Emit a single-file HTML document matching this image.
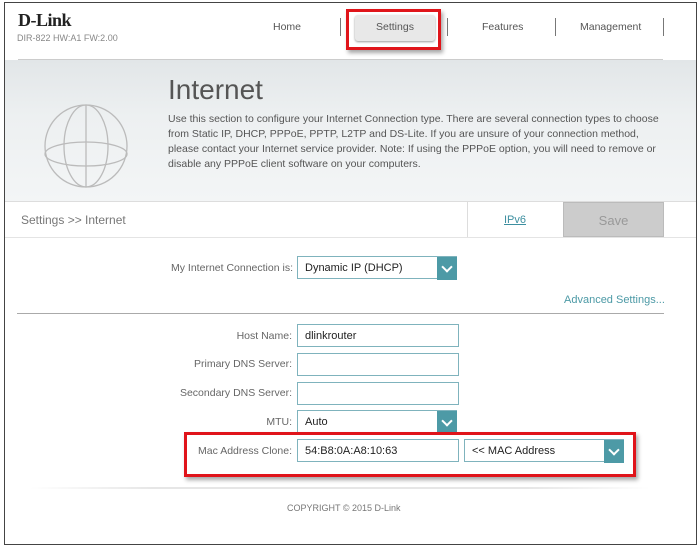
<!DOCTYPE html>
<html><head><style>
*{margin:0;padding:0;box-sizing:border-box}
body{width:700px;height:548px;background:#fff;font-family:"Liberation Sans",sans-serif;position:relative;overflow:hidden}
.a{position:absolute}
.frame{left:4px;top:2px;width:693px;height:543px;border:1px solid #444}
.lbl{font-size:10.5px;color:#666;text-align:right;width:140px}
.inp{border:1px solid #7fb3bd;background:#fff;height:23px;font-size:11px;color:#222;padding:5px 0 0 7px}
.dd{width:20px;height:23px;background:#4d9aa6;top:0;right:-1px}
.dd:after{content:"";position:absolute;left:6px;top:6px;width:6px;height:6px;border-right:2px solid #fff;border-bottom:2px solid #fff;transform:rotate(45deg)}
.red{border:3px solid #e0141a;box-shadow:2px 3px 4px rgba(0,0,0,.35)}
</style></head><body>
<div class="a frame"></div>
<div class="a" style="left:5px;top:60px;width:691px;height:141px;background:linear-gradient(180deg,#e2e6e8,#edf0f1 40%,#f3f5f6);"></div>
<div class="a" style="left:18px;top:59px;width:645px;height:1px;background:#ccc"></div>
<div class="a" style="left:18px;top:10px;font-family:'Liberation Serif',serif;font-weight:bold;font-size:18px;color:#222;letter-spacing:-0.5px">D-Link</div>
<div class="a" style="left:17px;top:33px;font-size:9px;color:#888">DIR-822 HW:A1 FW:2.00</div>
<div class="a" style="left:273px;top:21px;font-size:10.5px;color:#555">Home</div>
<div class="a" style="left:340px;top:18px;width:1px;height:18px;background:#777"></div>
<div class="a" style="left:355px;top:15px;width:80px;height:26px;background:#e8e8e8;border-radius:3px;box-shadow:0 1px 2px #999"></div>
<div class="a" style="left:376px;top:21px;font-size:10.5px;color:#555">Settings</div>
<div class="a" style="left:447px;top:18px;width:1px;height:18px;background:#777"></div>
<div class="a" style="left:482px;top:21px;font-size:10.5px;color:#555">Features</div>
<div class="a" style="left:555px;top:18px;width:1px;height:18px;background:#777"></div>
<div class="a" style="left:580px;top:21px;font-size:10.5px;color:#555">Management</div>
<div class="a" style="left:663px;top:18px;width:1px;height:18px;background:#777"></div>
<div class="a red" style="left:346px;top:9px;width:95px;height:41px"></div>
<svg class="a" style="left:42px;top:102px" width="88" height="88" viewBox="0 0 88 88" fill="none" stroke="#bbb" stroke-width="1.3"><circle cx="44" cy="44" r="41"/><ellipse cx="44" cy="44" rx="22" ry="41"/><line x1="44" y1="3" x2="44" y2="85"/><ellipse cx="44" cy="52" rx="41" ry="12"/></svg>
<div class="a" style="left:168px;top:74px;font-size:28px;color:#555">Internet</div>
<div class="a" style="left:168px;top:112px;width:500px;font-size:10.5px;line-height:15px;color:#555">Use this section to configure your Internet Connection type. There are several connection types to choose from Static IP, DHCP, PPPoE, PPTP, L2TP and DS-Lite. If you are unsure of your connection method, please contact your Internet service provider. Note: If using the PPPoE option, you will need to remove or disable any PPPoE client software on your computers.</div>
<div class="a" style="left:5px;top:201px;width:691px;height:37px;border-top:1px solid #ddd;border-bottom:1px solid #e4e4e4"></div>
<div class="a" style="left:21px;top:213px;font-size:12px;color:#777">Settings &gt;&gt; Internet</div>
<div class="a" style="left:467px;top:202px;width:1px;height:35px;background:#ddd"></div>
<div class="a" style="left:504px;top:214px;font-size:11px;color:#3d8fa0;text-decoration:underline">IPv6</div>
<div class="a" style="left:563px;top:202px;width:101px;height:35px;background:#ccc;border:1px solid #bbb;color:#999;font-size:13px;text-align:center;padding-top:10px">Save</div>
<div class="a lbl" style="left:153px;top:262px;width:140px">My Internet Connection is:</div>
<div class="a inp" style="left:297px;top:256px;width:160px">Dynamic IP (DHCP)<div class="a dd"></div></div>
<div class="a" style="left:564px;top:294px;font-size:11px;color:#4d9aa6">Advanced Settings...</div>
<div class="a" style="left:17px;top:313px;width:647px;height:1px;background:#aaa"></div>
<div class="a lbl" style="left:152px;top:330px">Host Name:</div>
<div class="a inp" style="left:297px;top:324px;width:162px">dlinkrouter</div>
<div class="a lbl" style="left:152px;top:358px">Primary DNS Server:</div>
<div class="a inp" style="left:297px;top:353px;width:162px"></div>
<div class="a lbl" style="left:152px;top:387px">Secondary DNS Server:</div>
<div class="a inp" style="left:297px;top:382px;width:162px"></div>
<div class="a lbl" style="left:152px;top:416px">MTU:</div>
<div class="a inp" style="left:297px;top:410px;width:160px">Auto<div class="a dd"></div></div>
<div class="a lbl" style="left:152px;top:445px">Mac Address Clone:</div>
<div class="a inp" style="left:297px;top:439px;width:162px">54:B8:0A:A8:10:63</div>
<div class="a inp" style="left:464px;top:439px;width:160px">&lt;&lt; MAC Address<div class="a dd"></div></div>
<div class="a red" style="left:184px;top:432px;width:452px;height:45px"></div>
<div class="a" style="left:30px;top:487px;width:620px;height:2px;background:linear-gradient(90deg,#fff,#e6e6e6 20%,#e6e6e6 80%,#fff)"></div>
<div class="a" style="left:287px;top:503px;font-size:9px;color:#777">COPYRIGHT © 2015 D-Link</div>
</body></html>
